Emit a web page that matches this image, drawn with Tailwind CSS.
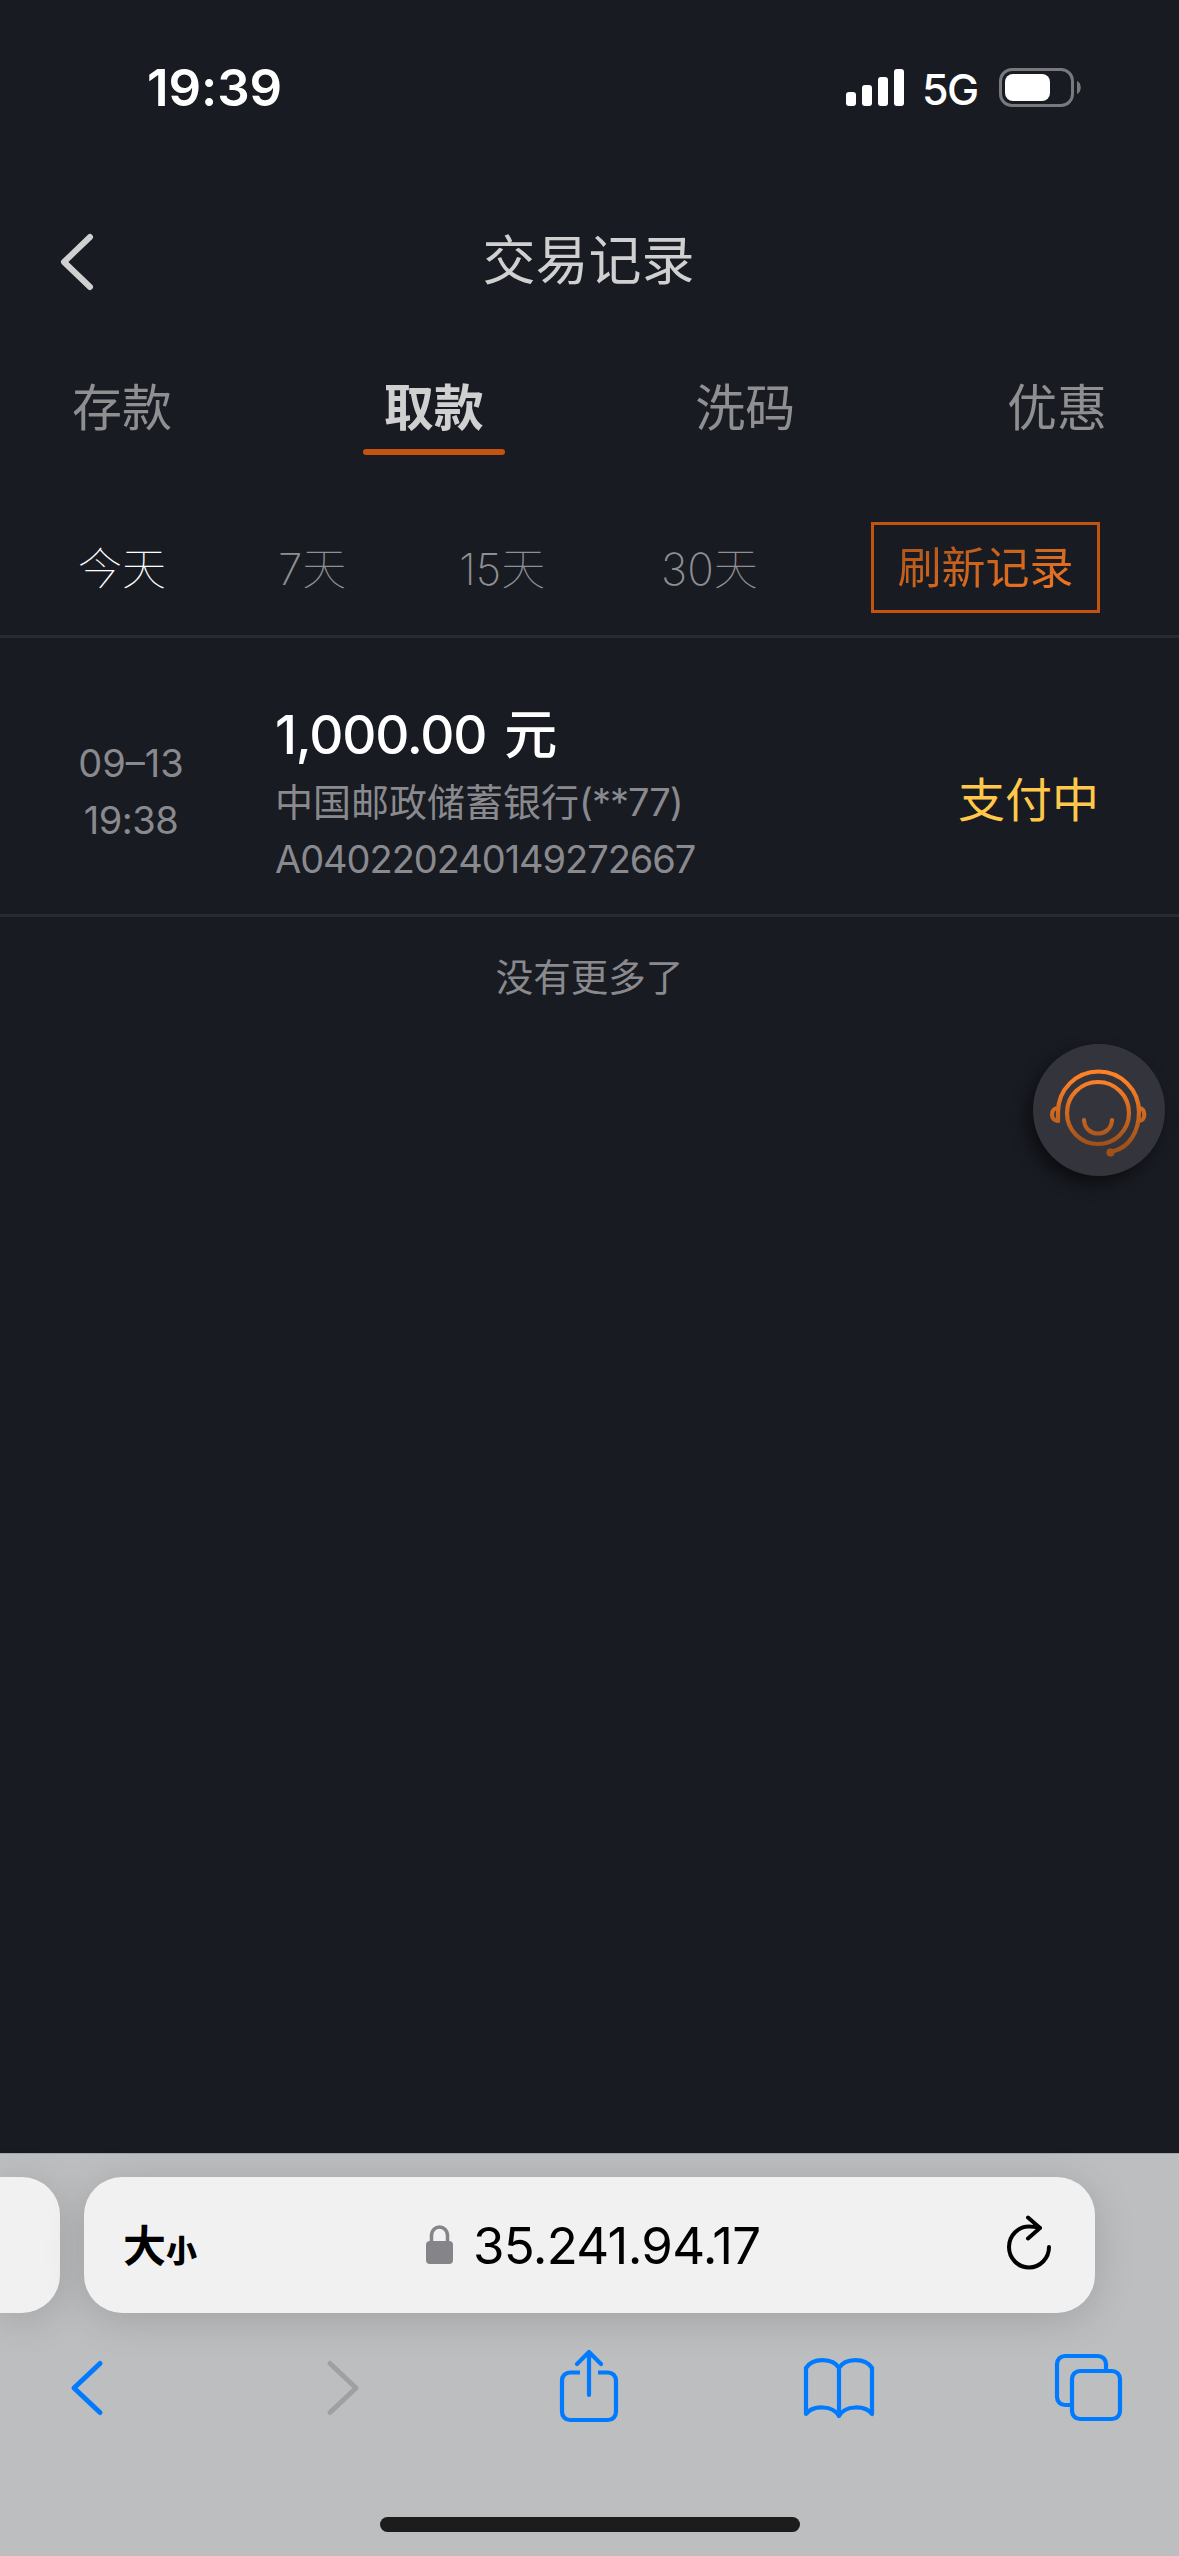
<!DOCTYPE html>
<html lang="zh-CN">
<head>
<meta charset="utf-8">
<title>交易记录</title>
<script src="https://cdn.jsdelivr.net/npm/@tailwindcss/browser@4"></script>
</head>
<body class="w-[1179px] h-[2556px] overflow-hidden bg-[#181b22] font-['Inter','Noto_Sans_CJK_SC',sans-serif]">
<div class="relative flex h-full flex-col">

  <!-- status bar -->
  <div class="flex h-[177px] shrink-0 items-start pl-[147px] pr-[97px] pt-[62px]">
    <span class="text-[51px] leading-[52px] font-semibold text-white tracking-[-0.1px] whitespace-nowrap">19:39</span>
    <svg class="ml-auto mt-[7px]" width="58" height="38" viewBox="0 0 58 38" fill="#fff"><rect x="0" y="23" width="10" height="14" rx="3"/><rect x="16" y="16" width="10" height="21" rx="3"/><rect x="32" y="8" width="10" height="29" rx="3"/><rect x="48" y="0" width="10" height="37" rx="3"/></svg>
    <span class="ml-[18px] mt-px w-[58px] text-[43px] leading-[52px] font-medium text-white tracking-[-1.5px] whitespace-nowrap">5G</span>
    <svg class="ml-[19px] mt-[6px]" width="83" height="39" viewBox="0 0 83 39"><rect x="1.5" y="1.5" width="72" height="36" rx="11.5" fill="none" stroke="#78797d" stroke-width="3"/><rect x="6" y="6" width="45" height="27" rx="8" fill="#fff"/><path d="M78 13c5 2 5 11 0 13z" fill="#78797d"/></svg>
  </div>

  <!-- page header -->
  <div class="relative flex h-[167px] shrink-0 items-start justify-center pt-[58px]">
    <svg class="absolute left-[58px] top-[55px]" width="38" height="60" viewBox="0 0 38 60" fill="none" stroke="#d0d0d0" stroke-width="6" stroke-linecap="round" stroke-linejoin="round"><path d="M32 5L6 30l26 25"/></svg>
    <h1 class="pr-[2px] text-[53px] leading-[53px] text-[#d0d0d0]">交易记录</h1>
  </div>

  <!-- record type tabs -->
  <div class="flex h-[138px] shrink-0 items-start justify-between px-[51px] pt-[37px] text-[50px] leading-[54px] text-[#8f8f92]">
    <span class="w-[142px] text-center">存款</span>
    <div class="flex w-[142px] flex-col items-center gap-[14px] font-bold text-[#d0d0d0]"><span>取款</span><span class="h-[6px] w-full rounded-full bg-[#c4530f]"></span></div>
    <span class="w-[142px] text-center">洗码</span>
    <span class="w-[142px] text-center">优惠</span>
  </div>

  <!-- date filters -->
  <div class="flex h-[156px] shrink-0 items-start border-b-[3px] border-[#282b34] pl-[78px] pr-[79px] pt-[40px] text-[44px] leading-[95px] font-thin text-[#8f8f92]">
    <span class="w-[200px] text-white">今天</span>
    <span class="w-[181px]"><span class="font-extralight">7</span>天</span>
    <span class="w-[202px]"><span class="font-extralight">15</span>天</span>
    <span><span class="font-extralight">30</span>天</span>
    <div class="ml-auto flex h-[91px] w-[229px] items-center justify-center border-[3px] border-[#c4530f] font-normal"><span class="bg-linear-to-br from-[#a8531b] to-[#f97a22] bg-clip-text leading-[60px] text-transparent">刷新记录</span></div>
  </div>

  <!-- transaction -->
  <div class="flex h-[279px] shrink-0 items-center border-b-[3px] border-[#282b34] pr-[80px] text-[38px] leading-[57px] text-[#8a8a8e]">
    <div class="ml-[51px] mt-[32px] w-[160px] text-center"><div>09–13</div><div class="tracking-[-0.5px]">19:38</div></div>
    <div class="ml-[64px] mt-[35px]">
      <div class="pb-[3px] text-[53px] leading-[72px] font-medium text-white"><span class="tracking-[-1.2px]">1,000.00</span><span class="ml-[18px]">元</span></div>
      <div>中国邮政储蓄银行<span class="tracking-[-1px]">(**77)</span></div>
      <div class="tracking-[-1.05px]">A040220240149272667</div>
    </div>
    <div class="ml-auto mt-[46px] text-[47px]">
      <span class="text-[#ffc84a]">支付中</span>
    </div>
  </div>
  <div class="pt-[32px] text-center text-[37.5px] leading-[57px] text-[#8a8a8e]">没有更多了</div>

  <!-- customer service bubble -->
  <div class="absolute left-[1033px] top-[1044px] h-[132px] w-[132px] rounded-full bg-[#34343d] shadow-[-6px_8px_16px_rgba(0,0,0,0.5)]">
    <svg width="132" height="132" viewBox="0 0 132 132" fill="none" stroke="url(#o)" stroke-width="4.2" stroke-linecap="round">
      <defs><linearGradient id="o" gradientUnits="userSpaceOnUse" x1="0" y1="36" x2="0" y2="100"><stop offset="0" stop-color="#ff8126"/><stop offset="1" stop-color="#a0511a"/></linearGradient></defs>
      <circle cx="65" cy="69" r="31"/>
      <path d="M25 77V68a40 40 0 0 1 81 0c0 20-10 35-25 39"/>
      <path d="M25 77c-8 0-8-13 0-13M106 77c7 0 7-13 0-13"/>
      <path d="M51 76c1 18 27 18 28 0"/>
      <circle cx="77.500" cy="108.500" r="4" fill="url(#o)" stroke="none"/>
    </svg>
  </div>

  <!-- browser toolbar -->
  <div class="mt-auto flex h-[403px] shrink-0 flex-col border-t border-[#a5a6a9] bg-[#bdbec0]">
    <div class="mt-[23px] flex gap-6">
      <div class="h-[136px] w-[60px] rounded-r-[38px] bg-[#f1f1f1] shadow-[0_6px_40px_rgba(0,0,0,0.15)]"></div>
      <div class="flex h-[136px] w-[1011px] items-center rounded-[38px] bg-[#f1f1f1] text-black shadow-[0_6px_40px_rgba(0,0,0,0.15)]">
        <span class="ml-[39px] mt-[3px] w-[303px] whitespace-nowrap font-bold"><span class="text-[43px]">大</span><span class="text-[31px] font-black">小</span></span>
        <svg width="28" height="40" viewBox="0 0 28 40"><rect x="0" y="16" width="27" height="23" rx="4" fill="#858489"/><path d="M5.500 18V11c0-12 16-12 16 0v7" fill="none" stroke="#858489" stroke-width="3.500"/></svg>
        <span class="ml-[19px] mt-[2px] text-[51px] tracking-[-0.7px]">35.241.94.17</span>
        <svg class="-mt-[6px] ml-auto mr-[42px]" width="48" height="58" viewBox="0 0 48 58" fill="none" stroke="#000" stroke-width="4" stroke-linecap="round" stroke-linejoin="round"><path d="M44 34a20 20.500 0 1 1-20-20.500q5 0 11 1.500M23 4.500l12 10.500-12 10.500"/></svg>
      </div>
    </div>
    <div class="mt-[31px] flex h-[88px] items-center pl-[69px] pr-[55px]">
      <svg width="36" height="60" viewBox="0 0 36 60" fill="none" stroke="#007aff" stroke-width="5" stroke-linecap="round" stroke-linejoin="round"><path d="M31 5.500L5 30l26 24.500"/></svg>
      <svg class="ml-[220px]" width="36" height="60" viewBox="0 0 36 60" fill="none" stroke="#9fa0a1" stroke-width="5" stroke-linecap="round" stroke-linejoin="round"><path d="M5 5.500L31 30 5 54.500"/></svg>
      <svg class="-mt-[4px] ml-[196px]" width="64" height="76" viewBox="0 0 64 76" fill="none" stroke="#007aff" stroke-width="4.200" stroke-linecap="round" stroke-linejoin="round"><path stroke-linecap="butt" d="M23 24.500H13a8 8 0 0 0-8 8V64a8 8 0 0 0 8 8h38a8 8 0 0 0 8-8V32.500a8 8 0 0 0-8-8H41"/><path d="M32 47V5M20 16L32 4l12 12"/></svg>
      <svg class="ml-[180px]" width="76" height="64" viewBox="0 0 76 64" fill="none" stroke="#007aff" stroke-width="4.200" stroke-linecap="round" stroke-linejoin="round"><path d="M38 12C32 2 12 1 5 12v46c7-9 27-9 33 2 6-11 26-11 33-2V12C64 1 44 2 38 12zv48"/></svg>
      <svg class="ml-auto" width="70" height="70" viewBox="0 0 70 70" fill="none" stroke="#007aff" stroke-width="4.200"><rect x="18" y="18" width="48" height="48" rx="8"/><path d="M18 52h-7a8 8 0 0 1-8-8V11a8 8 0 0 1 8-8h33a8 8 0 0 1 8 8v7"/></svg>
    </div>
    <div class="mx-auto mt-auto mb-6 h-[15px] w-[420px] rounded-full bg-[#1c1c1c]"></div>
  </div>
</div>
</body>
</html>
